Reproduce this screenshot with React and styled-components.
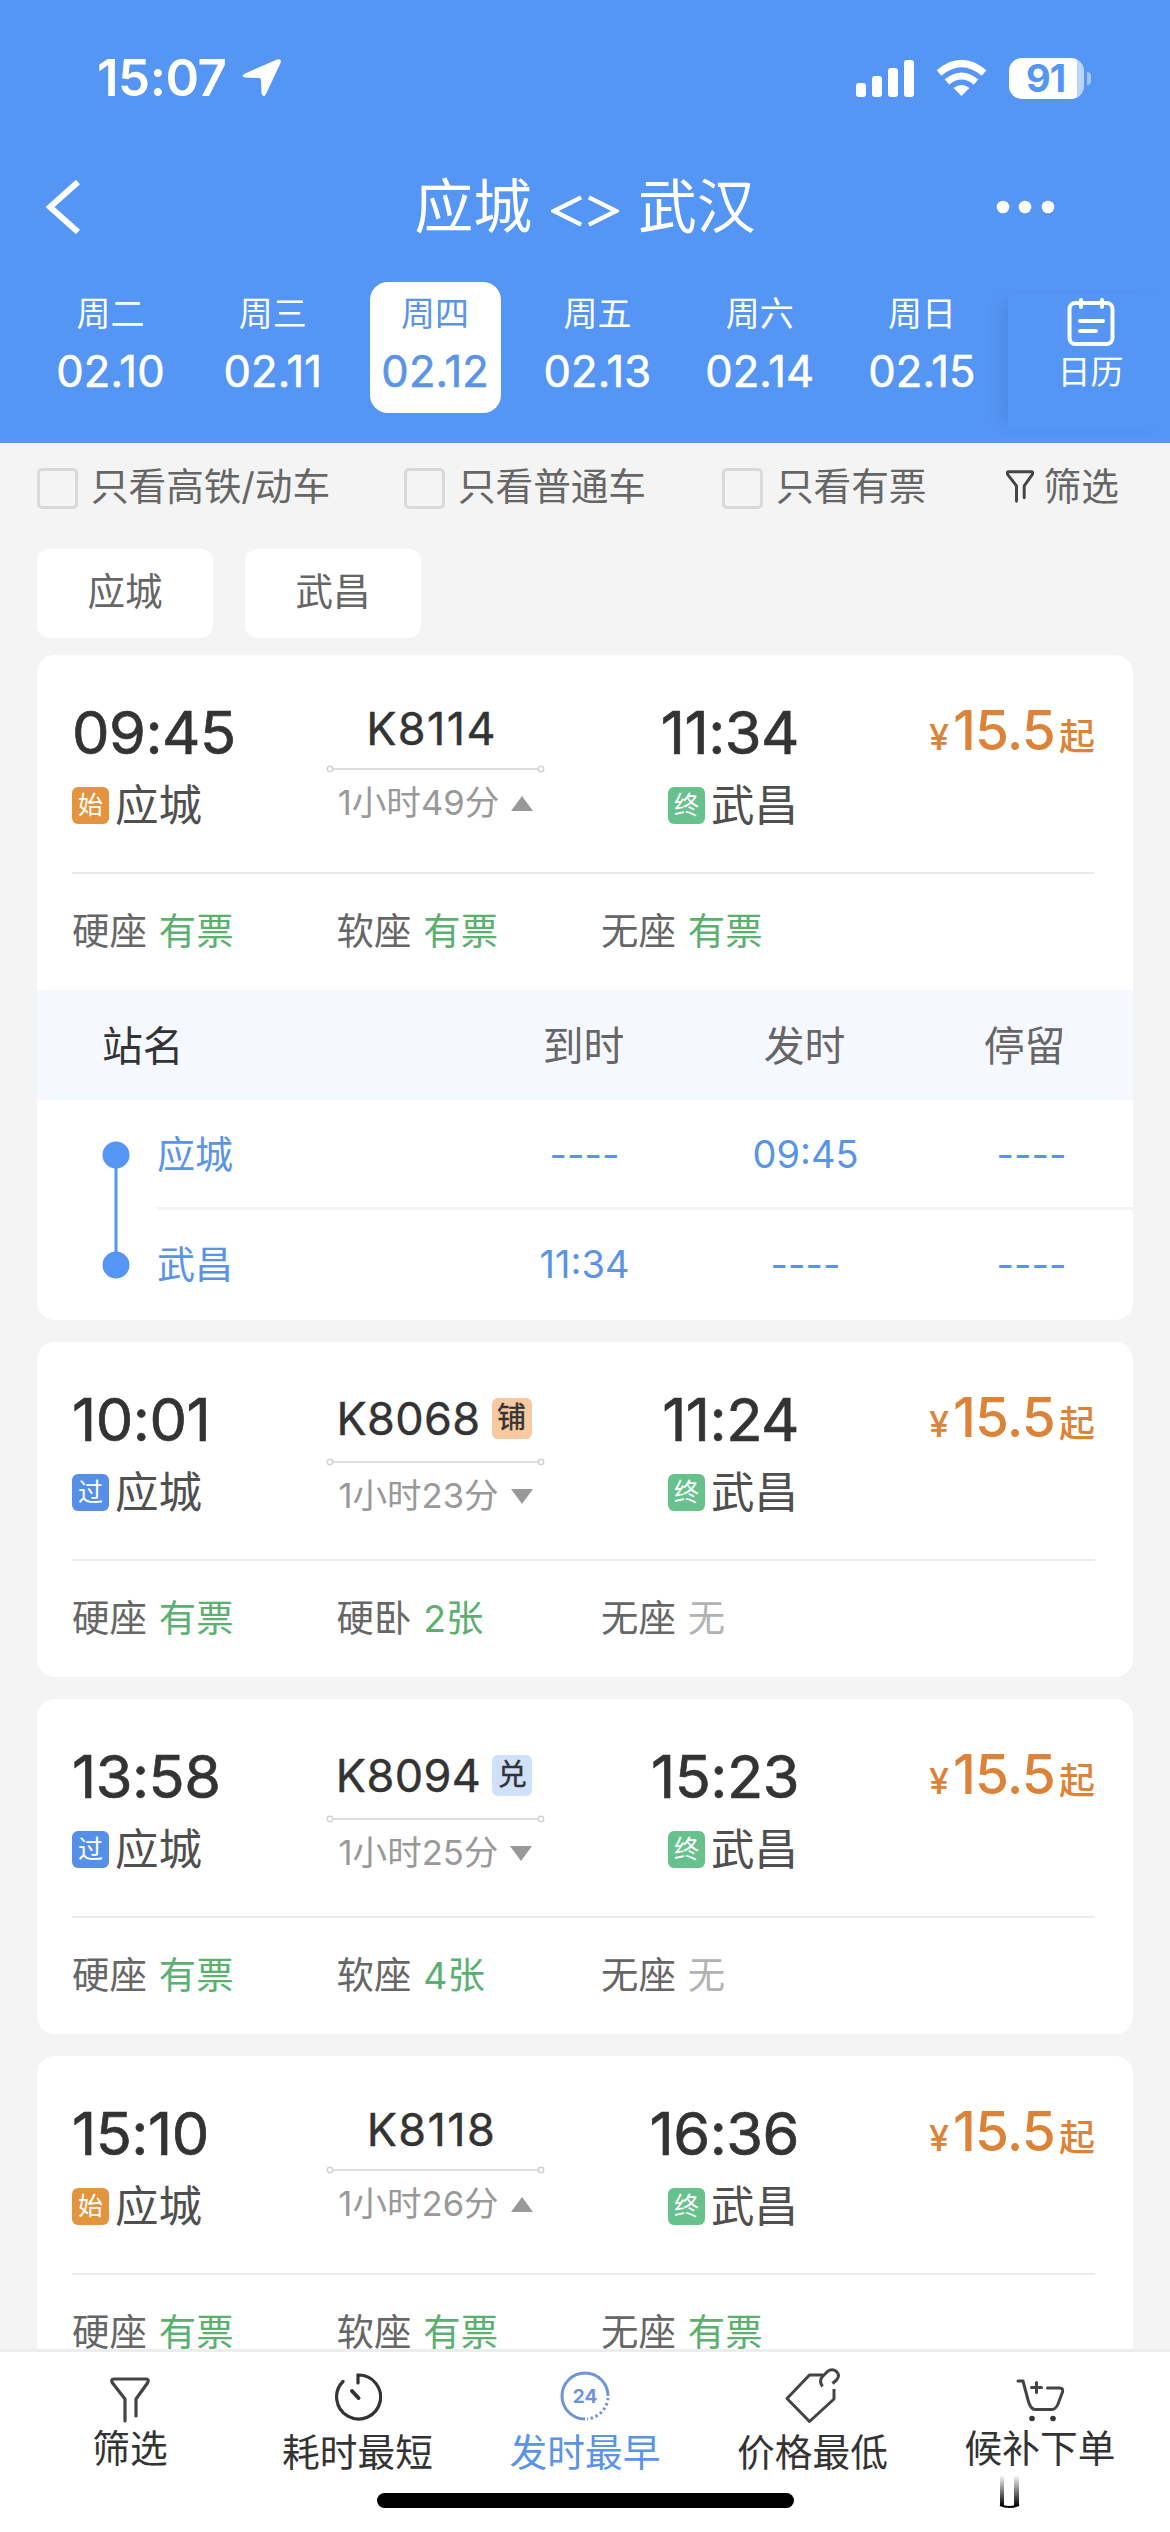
import React, { useState } from 'react';
import styled, { createGlobalStyle } from 'styled-components';

const GlobalStyle = createGlobalStyle`
  * {
    box-sizing: border-box;
  }

  body {
    margin: 0;
    background: #f4f4f4;
    font-family: Inter, 'Noto Sans CJK SC', sans-serif;
    color: #333;
  }
`;

const Screen = styled.div`
  display: flex;
  flex-direction: column;
  width: 1170px;
  height: 2532px;
  overflow: hidden;
  background: #f4f4f4;
`;

const Header = styled.header`
  height: 443px;
  flex-shrink: 0;
  background: #5595f3;
  color: #fff;
`;

const StatusBar = styled.div`
  display: flex;
  align-items: center;
  justify-content: space-between;
  height: 156px;
  padding: 0 79px 0 97px;
`;

const StatusGroup = styled.div`
  display: flex;
  align-items: center;
  gap: ${props => props.gap}px;
`;

const Clock = styled.span`
  font-size: 51px;
  font-weight: 600;
  line-height: 60px;
  letter-spacing: -0.5px;
`;

const Battery = styled.div`
  display: flex;
  align-items: center;
  gap: 3px;
`;

const BatteryBody = styled.div`
  width: 75px;
  height: 41px;
  border-radius: 13px;
  background: linear-gradient(90deg, #fff 68px, #bbd5fa 68px);
  color: #5595f3;
  font-size: 38px;
  font-weight: 700;
  line-height: 41px;
  text-align: center;
  letter-spacing: -1px;
  padding-right: 2px;
`;

const BatteryTip = styled.div`
  width: 4px;
  height: 13px;
  border-radius: 0 4px 4px 0;
  background: #a4c6f8;
`;

const NavBar = styled.div`
  display: grid;
  grid-template-columns: 200px 1fr 200px;
  align-items: center;
  height: 101px;
  padding: 0 45px;
`;

const Title = styled.h1`
  display: flex;
  justify-content: center;
  gap: 19px;
  margin: 0;
  font-size: 58.8px;
  font-weight: 400;
  line-height: 80px;
`;

const Arrows = styled.svg`
  align-self: center;
  margin-top: 8px;
`;

const DateBar = styled.div`
  display: flex;
  justify-content: space-between;
  height: 186px;
  padding: 25px 0 0 45px;
`;

const Days = styled.div`
  display: flex;
  gap: 31.3px;
`;

const Day = styled.button`
  display: flex;
  flex-direction: column;
  align-items: center;
  gap: 12px;
  width: 131px;
  height: 131px;
  padding: 12px 0 0;
  border: none;
  border-radius: 18px;
  background: ${props => (props.$active ? '#fff' : 'transparent')};
  color: ${props => (props.$active ? '#5a94e6' : '#fff')};
  font-family: inherit;
`;

const Weekday = styled.span`
  font-size: 34px;
  line-height: 40px;
`;

const DateText = styled.span`
  font-size: 43.5px;
  line-height: 50px;
  letter-spacing: 0.1px;
  -webkit-text-stroke: 0.6px currentColor;
`;

const Calendar = styled.div`
  display: flex;
  flex-direction: column;
  align-items: center;
  gap: 4px;
  width: 162px;
  height: 136px;
  margin-top: 12px;
  padding: 3px 0 0 3px;
  background: #5595f3;
  box-shadow: -12px 0 14px -8px rgba(40, 90, 180, 0.24);
  font-size: 33px;
  line-height: 42px;
`;

const Filters = styled.div`
  display: flex;
  align-items: center;
  height: 88px;
  flex-shrink: 0;
  padding: 0 37px 2px;
  color: #666;
  font-size: 37.7px;
  line-height: 50px;
`;

const Option = styled.label`
  display: flex;
  align-items: center;
  gap: 13px;
  width: ${props => props.width}px;
  letter-spacing: -0.1px;
`;

const Checkbox = styled.span`
  width: 41px;
  height: 41px;
  margin-top: 5px;
  border: 3px solid #d9d9d9;
  border-radius: 5px;
`;

const FilterLink = styled.div`
  display: flex;
  align-items: center;
  gap: 10px;
  margin-left: auto;
  padding-right: 14px;
`;

const Chips = styled.div`
  display: flex;
  flex-shrink: 0;
  gap: 32px;
  padding: 18px 37px 17px;
`;

const Chip = styled.div`
  width: 176px;
  height: 89px;
  border-radius: 12px;
  background: #fff;
  color: #666;
  font-size: 37.5px;
  line-height: 85px;
  text-align: center;
`;

const List = styled.main`
  display: flex;
  flex: 1;
  flex-direction: column;
  gap: 22px;
  min-height: 0;
  overflow: hidden;
  padding: 0 37px;
`;

const Card = styled.section`
  flex-shrink: 0;
  overflow: hidden;
  border-radius: 18px;
  background: #fff;
`;

const Summary = styled.div`
  display: flex;
  height: 219px;
  margin: 0 38px 0 35px;
  border-bottom: 2px solid #ebebeb;
`;

const Stop = styled.div`
  display: flex;
  flex-direction: column;
  align-items: ${props => (props.$end ? 'flex-end' : 'flex-start')};
  gap: 16px;
  width: 254px;
  padding-top: 45px;
`;

const Time = styled.div`
  font-size: 59.5px;
  line-height: 64px;
  letter-spacing: -0.5px;
  -webkit-text-stroke: 0.7px currentColor;
`;

const Station = styled.div`
  display: flex;
  align-items: center;
  gap: 6px;
  padding-right: 1px;
  color: #4f4f4f;
  font-size: 43.5px;
  line-height: 50px;
`;

const markColors = { 始: '#e3943f', 过: '#558fe8', 终: '#66c18c' };

const Mark = styled.span`
  width: 37px;
  height: 37px;
  border-radius: 6px;
  background: ${props => markColors[props.kind]};
  color: #fff;
  font-size: 25px;
  line-height: 36px;
  text-align: center;
`;

const Trip = styled.div`
  display: flex;
  flex-direction: column;
  align-items: center;
  width: 219px;
  padding-top: 50px;
`;

const Code = styled.div`
  display: flex;
  align-items: center;
  gap: 11px;
  height: ${props => (props.$tagged ? 52 : 46)}px;
  margin-bottom: 14px;
  padding-right: ${props => (props.$tagged ? 3 : 8)}px;
  font-size: 45px;
  letter-spacing: ${props => (props.$tagged ? 0.4 : 1.4)}px;
  -webkit-text-stroke: 0.4px currentColor;
`;

const tagColors = { 铺: '#f7c9a0', 兑: '#cfe0fb' };

const Tag = styled.span`
  width: 40px;
  height: 41px;
  border-radius: 6px;
  background: ${props => tagColors[props.kind]};
  font-size: 29px;
  letter-spacing: 0;
  line-height: 39px;
  text-align: center;
`;

const Duration = styled.div`
  display: flex;
  align-items: center;
  gap: 12px;
  margin-top: 9px;
  color: #999;
  font-size: 34.6px;
  line-height: 40px;
`;

const Triangle = styled.svg`
  margin-top: 3px;
`;

const Price = styled.div`
  display: flex;
  align-items: baseline;
  justify-content: flex-end;
  flex: 1;
  padding: 43px 0 0;
  color: #db8439;
  font-weight: 500;
  font-size: 36px;
  line-height: 64px;
`;

const Amount = styled.span`
  margin: 0 4px 0 4px;
  font-size: 55px;
  letter-spacing: -0.9px;
`;

const Seats = styled.div`
  display: grid;
  grid-template-columns: 264.5px 264.5px 1fr;
  align-items: center;
  height: 116px;
  padding: 0 35px 5px;
  font-size: 37.4px;
`;

const Seat = styled.div`
  display: flex;
  gap: 12px;
  margin-bottom: 2px;
  color: #666;
`;

const Left = styled.span`
  color: ${props => (props.$none ? '#b3b3b3' : '#5bb070')};
`;

const TableHead = styled.div`
  display: grid;
  grid-template-columns: 66px 370px 221px 221px 219px;
  height: 110px;
  background: #f5f8fe;
  color: #666;
  font-size: 40.8px;
  line-height: 112px;
  text-align: center;
`;

const HeadName = styled.span`
  grid-column: 1 / 3;
  padding-left: 65px;
  color: #333;
  text-align: left;
`;

const TableRow = styled.div`
  display: grid;
  grid-template-columns: 120px 1fr;
  height: 110px;
  color: #5a94e6;
  font-size: 38px;
`;

const Cells = styled.div`
  display: grid;
  grid-template-columns: 317px 221px 221px 1fr;
  align-items: center;
  text-align: center;
  border-bottom: 3px solid ${props => (props.$last ? 'transparent' : '#f3f3f3')};
`;

const StopName = styled.span`
  margin-bottom: 5px;
  text-align: left;
`;

const Clocking = styled.span`
  padding-left: ${props => (props.$last ? 14 : 0)}px;
`;

const Rail = styled.svg`
  display: block;
  margin-left: 65px;
`;

const TabBar = styled.nav`
  display: grid;
  grid-template-columns: repeat(5, 227.5px);
  justify-content: center;
  flex-shrink: 0;
  height: 144px;
  border-top: 3px solid #ededed;
  background: #fff;
`;

const Tab = styled.button`
  display: flex;
  flex-direction: column;
  align-items: center;
  justify-content: flex-start;
  gap: ${props => (props.$low ? 5 : 1)}px;
  padding: ${props => (props.$low ? 16 : 24)}px 0 0;
  border: none;
  background: none;
  color: ${props => (props.$active ? '#5a94e6' : '#333')};
  font-family: inherit;
  font-size: 37.7px;
  line-height: 46px;
`;

const TabIcon = styled.span`
  display: flex;
  align-items: center;
  height: ${props => (props.$low ? 56 : 48)}px;
`;

const HomeArea = styled.div`
  position: relative;
  flex-shrink: 0;
  height: 39px;
  background: #fff;
`;

const HomeIndicator = styled.div`
  width: 417px;
  height: 15px;
  margin: 0 auto;
  border-radius: 8px;
  background: #000;
`;

const Smudge = styled.svg`
  position: absolute;
  left: 999px;
  top: -18px;
`;

const days = [
  ['周二', '02.10'],
  ['周三', '02.11'],
  ['周四', '02.12'],
  ['周五', '02.13'],
  ['周六', '02.14'],
  ['周日', '02.15'],
];

const trains = [
  {
    code: 'K8114', from: '09:45', to: '11:34', mark: '始', duration: '1小时49分', up: true,
    seats: [['硬座', '有票'], ['软座', '有票'], ['无座', '有票']],
    stops: [['应城', '----', '09:45', '----'], ['武昌', '11:34', '----', '----']],
  },
  {
    code: 'K8068', tag: '铺', from: '10:01', to: '11:24', mark: '过', duration: '1小时23分',
    seats: [['硬座', '有票'], ['硬卧', '2张'], ['无座', '无']],
  },
  {
    code: 'K8094', tag: '兑', from: '13:58', to: '15:23', mark: '过', duration: '1小时25分',
    seats: [['硬座', '有票'], ['软座', '4张'], ['无座', '无']],
  },
  {
    code: 'K8118', from: '15:10', to: '16:36', mark: '始', duration: '1小时26分', up: true,
    seats: [['硬座', '有票'], ['软座', '有票'], ['无座', '有票']],
  },
];

const FunnelIcon = ({ width, height, weight = 3.2 }) => (
  <svg width={width} height={height} viewBox="0 0 40 46" fill="none" stroke="#444" strokeWidth={weight} strokeLinecap="round" strokeLinejoin="round">
    <path d="M15 44V22L2.500 6Q0.500 2 4 2H36Q39.500 2 37.500 6L26 22V39" />
  </svg>
);

const TimerIcon = () => (
  <svg width="48" height="50" viewBox="0 0 48 50" fill="none" stroke="currentColor" strokeWidth="3.200" strokeLinecap="round">
    <path d="M24 12V4A22 22 0 1 1 9 10.500" />
    <path d="M18 20L24.500 27" strokeWidth="4" />
  </svg>
);

const ClockIcon = () => (
  <svg width="50" height="50" viewBox="0 0 50 50" fill="none" stroke="#7093dc" strokeWidth="3">
    <path d="M25 48A23 23 0 1 1 48 25" />
    <path d="M48 27A23 23 0 0 1 27 48" strokeDasharray="2.400 2.800" />
    <text x="25" y="32" fill="#7093dc" stroke="none" fontSize="19" fontWeight="700" textAnchor="middle">24</text>
  </svg>
);

const PriceIcon = () => (
  <svg width="57" height="56" viewBox="0 0 57 56" fill="none" stroke="#444" strokeWidth="3" strokeLinecap="butt" strokeLinejoin="round">
    <path d="M39 7H25.500L3 30.500L25.500 53.500L50 31V21" />
    <path d="M38.500 18.500Q34.500 13 38.500 8.500L43.500 3.500Q48 0 52.500 3.500Q56.500 7.500 52.500 12L48.500 15.500" />
  </svg>
);

const CartIcon = () => (
  <svg width="50" height="46" viewBox="0 0 50 46" fill="none" stroke="#444" strokeWidth="3" strokeLinecap="round" strokeLinejoin="round">
    <path d="M3 4H8L13 23Q15.500 32.500 20 32.500H37Q40.500 32.500 43 27L47.500 15Q48.500 11 44.500 11H32.500" />
    <path d="M21.500 5.500V15.500M16.500 10.500H26.500" />
    <circle cx="17" cy="41.500" r="2.800" fill="#333" stroke="none" />
    <circle cx="38" cy="41.500" r="2.800" fill="#333" stroke="none" />
  </svg>
);

const tabs = [
  ['筛选', <FunnelIcon width={40} height={46} />, false],
  ['耗时最短', <TimerIcon />, true],
  ['发时最早', <ClockIcon />, true],
  ['价格最低', <PriceIcon />, true],
  ['候补下单', <CartIcon />, false],
];

const StopTable = ({ stops }) => (
  <div>
    <TableHead>
      <HeadName>站名</HeadName>
      <span>到时</span>
      <span>发时</span>
      <span>停留</span>
    </TableHead>
    {stops.map(([name, arrive, leave, stay], i) => {
      const last = i === stops.length - 1;
      return (
        <TableRow key={name}>
          <Rail width="28" height="110">
            <rect x="12.500" y={i === 0 ? 55 : 0} width="3" height="55" fill="#5595f3" />
            <circle cx="14" cy="55" r="13.500" fill="#5595f3" />
          </Rail>
          <Cells $last={last}>
            <StopName>{name}</StopName>
            <Clocking>{arrive}</Clocking>
            <Clocking>{leave}</Clocking>
            <Clocking $last>{stay}</Clocking>
          </Cells>
        </TableRow>
      );
    })}
  </div>
);

const TrainCard = ({ train }) => (
  <Card>
    <Summary>
      <Stop>
        <Time>{train.from}</Time>
        <Station><Mark kind={train.mark}>{train.mark}</Mark>应城</Station>
      </Stop>
      <Trip>
        <Code $tagged={!!train.tag}>
          {train.code}
          {train.tag && <Tag kind={train.tag}>{train.tag}</Tag>}
        </Code>
        <svg width="219" height="8" fill="none" stroke="#d2d2d2" strokeWidth="1.500">
          <path d="M7 4H212" />
          <circle cx="4" cy="4" r="2.700" />
          <circle cx="215" cy="4" r="2.700" />
        </svg>
        <Duration>
          {train.duration}
          <Triangle width="22" height="15" fill="#999">
            <path d={train.up ? 'M11 0L22 15H0Z' : 'M11 15L22 0H0Z'} />
          </Triangle>
        </Duration>
      </Trip>
      <Stop $end>
        <Time>{train.to}</Time>
        <Station><Mark kind="终">终</Mark>武昌</Station>
      </Stop>
      <Price>¥<Amount>15.5</Amount>起</Price>
    </Summary>
    <Seats>
      {train.seats.map(([name, left]) => (
        <Seat key={name}>
          {name}
          <Left $none={left === '无'}>{left}</Left>
        </Seat>
      ))}
    </Seats>
    {train.stops && <StopTable stops={train.stops} />}
  </Card>
);

const App = () => {
  const [day, setDay] = useState('02.12');
  const [sort, setSort] = useState('发时最早');

  return (
    <Screen>
      <GlobalStyle />
      <Header>
        <StatusBar>
          <StatusGroup gap={15}>
            <Clock>15:07</Clock>
            <svg width="41" height="40" viewBox="0 0 41 40" fill="#fff">
              <path d="M36 1.500Q41 0 39.500 5L25 36Q22 41 20.500 35L20 22Q20 20 18 20L4 19.500Q-1 18 4 15.500Z" />
            </svg>
          </StatusGroup>
          <StatusGroup gap={22}>
            <svg width="58" height="38" fill="#fff">
              <rect x="0" y="24" width="10" height="14" rx="3" />
              <rect x="16" y="17" width="10" height="21" rx="3" />
              <rect x="32" y="9" width="10" height="29" rx="3" />
              <rect x="48" y="1" width="10" height="37" rx="3" />
            </svg>
            <svg width="51" height="38" viewBox="0 0 51 38" fill="none" stroke="#fff" strokeWidth="7">
              <path d="M3 14Q25.500 -5 48 14" />
              <path d="M11 23Q25.500 11 40 23" />
              <path d="M25.500 37L17.500 29Q25.500 23 33.500 29Z" fill="#fff" stroke="none" />
            </svg>
            <Battery>
              <BatteryBody>91</BatteryBody>
              <BatteryTip />
            </Battery>
          </StatusGroup>
        </StatusBar>
        <NavBar>
          <svg width="36" height="54" viewBox="0 0 36 54" fill="none" stroke="#fff" strokeWidth="6">
            <path d="M33 2L5 27L33 52" />
          </svg>
          <Title>
            应城
            <Arrows width="68" height="34" viewBox="0 0 70 34" fill="none" stroke="#fff" strokeWidth="4.500">
              <path d="M31 3L3 17L31 31M39 3L67 17L39 31" />
            </Arrows>
            武汉
          </Title>
          <svg width="200" height="14" fill="#fff">
            <circle cx="78" cy="7" r="6.300" />
            <circle cx="100" cy="7" r="6.300" />
            <circle cx="123" cy="7" r="6.300" />
          </svg>
        </NavBar>
        <DateBar>
          <Days>
            {days.map(([weekday, date]) => (
              <Day key={date} $active={date === day} onClick={() => setDay(date)}>
                <Weekday>{weekday}</Weekday>
                <DateText>{date}</DateText>
              </Day>
            ))}
          </Days>
          <Calendar>
            <svg width="48" height="50" viewBox="0 0 48 50" fill="none" stroke="#fff" strokeWidth="4" strokeLinecap="round">
              <rect x="2.500" y="6" width="43" height="41" rx="6" />
              <path d="M14 3V10M35 3V10M13 24H36M13 34H29" />
            </svg>
            日历
          </Calendar>
        </DateBar>
      </Header>

      <Filters>
        <Option width={367}><Checkbox />只看高铁/动车</Option>
        <Option width={318}><Checkbox />只看普通车</Option>
        <Option width={230}><Checkbox />只看有票</Option>
        <FilterLink>
          <FunnelIcon width={28} height={33} weight={4.2} />
          筛选
        </FilterLink>
      </Filters>

      <Chips>
        <Chip>应城</Chip>
        <Chip>武昌</Chip>
      </Chips>

      <List>
        {trains.map(train => (
          <TrainCard key={train.code} train={train} />
        ))}
      </List>

      <TabBar>
        {tabs.map(([label, icon, low]) => (
          <Tab key={label} $low={low} $active={label === sort} onClick={() => setSort(label)}>
            <TabIcon $low={low}>{icon}</TabIcon>
            {label}
          </Tab>
        ))}
      </TabBar>
      <HomeArea>
        <HomeIndicator />
        <Smudge width="21" height="34" fill="none">
          <defs>
            <linearGradient id="fade" x1="0" y1="0" x2="0" y2="1">
              <stop offset="0" stopColor="#000" stopOpacity="0" />
              <stop offset="1" stopColor="#000" />
            </linearGradient>
          </defs>
          <rect x="1" y="0" width="4" height="31" fill="url(#fade)" />
          <rect x="15" y="0" width="5" height="31" fill="url(#fade)" />
          <path d="M1 30Q10 34 20 30" stroke="#000" strokeWidth="2" />
        </Smudge>
      </HomeArea>
    </Screen>
  );
};

export default App;
